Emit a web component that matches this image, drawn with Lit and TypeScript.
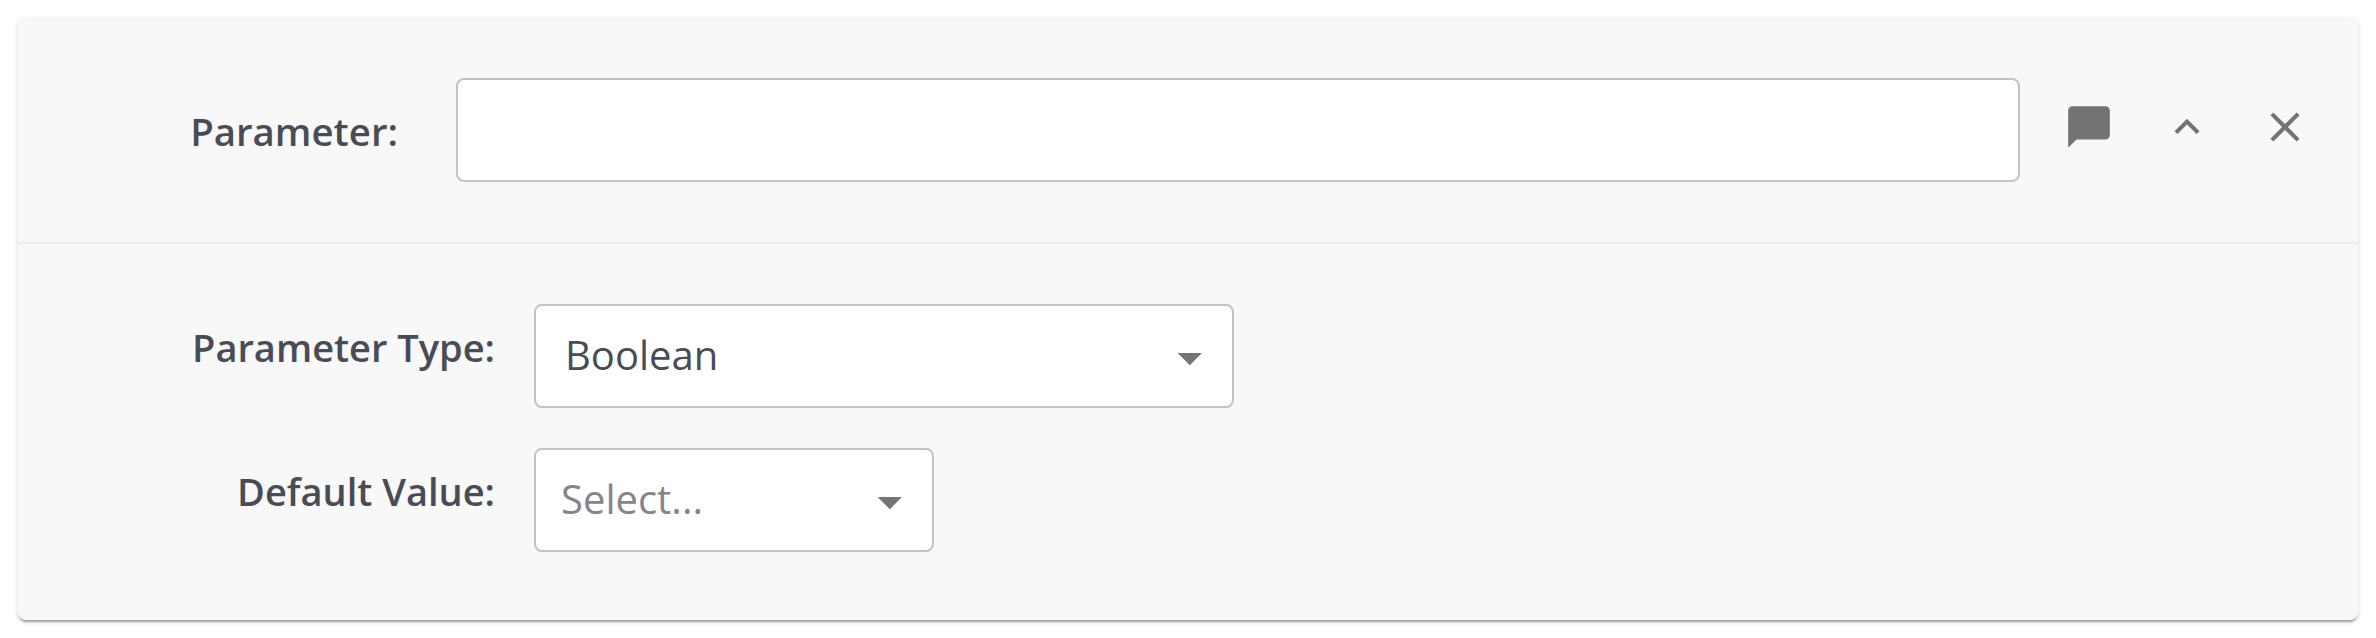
import { LitElement, html, css } from "lit";
import { customElement, property } from "lit/decorators.js";

@customElement("select-box")
class SelectBox extends LitElement {
  @property() value = "";
  @property() placeholder = "";

  static styles = css`
    :host { display: block; }
    .box {
      box-sizing: border-box; height: 104px; display: flex; align-items: center;
      justify-content: space-between; padding: 0 30px 2px 29px;
      background: #fff; border: 2px solid #c3c3c3; border-radius: 8px;
      font-size: 40px; line-height: 54px; color: #4a4c55;
    }
    .empty { padding-left: 25px; color: #85868b; }
    .arrow { display: block; width: 25px; height: 13px; margin-top: 9px; fill: #757575; }
  `;

  render() {
    return html`<div class="box ${this.value ? "" : "empty"}">
      <span>${this.value || this.placeholder}</span>
      <svg class="arrow" viewBox="0 0 25 13"><path d="M.6 0H25L12.8 12.3z" /></svg>
    </div>`;
  }
}

@customElement("app-root")
class AppRoot extends LitElement {
  static styles = css`
    :host {
      display: block; box-sizing: border-box; height: 638px; padding: 18px;
      background: #fff; font-family: "Open Sans", sans-serif; color: #4a4c55;
    }
    .card {
      box-sizing: border-box; height: 602px; background: #f8f8f8; border-radius: 8px;
      box-shadow: 0 4px 2px -2px rgba(0,0,0,.2), 0 2px 2px 0 rgba(0,0,0,.14), 0 2px 6px 0 rgba(0,0,0,.12);
    }
    .header {
      box-sizing: border-box; height: 226px; padding: 60px 48px 0 0;
      display: flex; align-items: flex-start; border-bottom: 2px solid #ebebed;
    }
    label { font-weight: 600; text-align: right; }
    .name { box-sizing: border-box; width: 438px; padding: 27px 58px 0 0; font-size: 38.4px; line-height: 52px; }
    .input {
      box-sizing: border-box; flex: 1; min-width: 0; height: 104px; margin: 0; padding: 0 28px;
      border: 2px solid #c3c3c3; border-radius: 8px; background: #fff; font: 40px "Open Sans", sans-serif;
      color: inherit; outline: none;
    }
    .actions { display: flex; gap: 48px; padding: 24px 0 0 44px; }
    .icon { display: block; width: 50px; height: 50px; fill: #737373; }
    .body { display: grid; gap: 40px; padding-top: 60px; }
    .row { display: flex; align-items: flex-start; }
    .row label { box-sizing: border-box; width: 516px; padding: 17px 39px 0 0; font-size: 38px; line-height: 52px; }
    .wide { width: 700px; }
    .narrow { width: 400px; }
  `;

  render() {
    return html`<section class="card">
      <div class="header">
        <label class="name" for="name">Parameter:</label>
        <input class="input" id="name" type="text" />
        <div class="actions">
          <svg class="icon" viewBox="0 0 24 24"><path d="M20 2H4c-1.1 0-1.99.9-1.99 2L2 22l4-4h14c1.1 0 2-.9 2-2V4c0-1.1-.9-2-2-2z" /></svg>
          <svg class="icon" viewBox="0 0 24 24"><path d="M12 8l-6 6 1.41 1.41L12 10.83l4.59 4.58L18 14z" /></svg>
          <svg class="icon" viewBox="0 0 24 24"><path d="M19 6.41L17.59 5 12 10.59 6.41 5 5 6.41 10.59 12 5 17.59 6.41 19 12 13.41 17.59 19 19 17.59 13.41 12z" /></svg>
        </div>
      </div>
      <div class="body">
        <div class="row"><label>Parameter Type:</label><select-box class="wide" value="Boolean"></select-box></div>
        <div class="row"><label>Default Value:</label><select-box class="narrow" placeholder="Select..."></select-box></div>
      </div>
    </section>`;
  }
}
